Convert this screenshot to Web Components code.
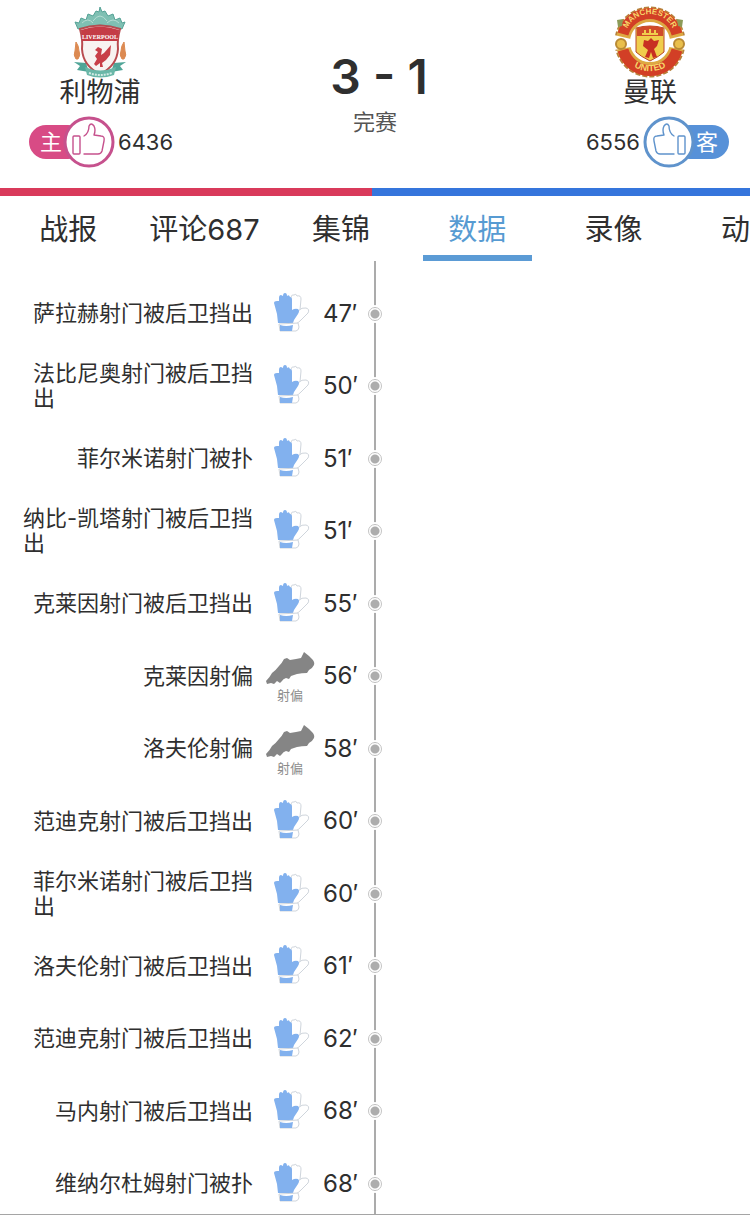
<!DOCTYPE html>
<html lang="zh-CN">
<head>
<meta charset="utf-8">
<meta name="viewport" content="width=device-width, initial-scale=1">
<title>利物浦 3 - 1 曼联</title>
<style>
  body {
    margin: 0;
    background: #fff;
    color: #2f2f2f;
    font-family: Inter, "Noto Sans CJK SC", sans-serif;
  }
</style>
</head>
<body>
<match-page></match-page>

<script>
'use strict';

const CRESTS = {
  liverpool: `
    <svg viewBox="0 0 72 72" role="img" aria-label="Liverpool">
      <path d="M14 23 L11 16 L15 17 L17 12 L22 14 L24 8 L29 10 L32 5 L35 6 L36 1 L38 6 L41 5 L44 10 L49 8 L51 14 L56 12 L58 17 L61 16 L58 23 Q36 15 14 23Z" fill="#7fc0b3" stroke="#55a296" stroke-width="1"/>
      <path d="M18 17 Q24 11 29 17 M29 15 Q36 5 43 15 M43 17 Q49 11 55 17" fill="none" stroke="#b5dcd2" stroke-width="1"/>
      <path d="M12 36 Q15 40 15 45 Q17 49 14 53 L12 53 Q9 49 11 45Z M60 36 Q57 40 57 45 Q55 49 58 53 L60 53 Q63 49 61 45Z" fill="#dc8a52" stroke="#dc8a52" stroke-width="1"/>
      <path d="M10 56 L22 57 L25 66 L13 64 L16 60Z M62 56 L50 57 L47 66 L59 64 L56 60Z" fill="#4fa597"/>
      <path d="M16 23 Q36 16 56 23 Q53 34 54 43 Q53 60 36 68 Q19 60 18 43 Q19 34 16 23Z" fill="#f8f3f1" stroke="#b94b4f" stroke-width="2"/>
      <path d="M17 24 Q36 17 55 24 L54 35 L18 35Z" fill="#c43c46"/>
      <text x="36" y="33" text-anchor="middle" font-family="Liberation Serif, serif" font-size="6" font-weight="bold" fill="#fff">LIVERPOOL</text>
      <path d="M31 44 L34 41 L38 43 L37 49 L40 47 L47 39 L46 49 L42 54 L38 57 L39 61 L36 61 L36 57 L32 60 L30 58 L33 53 L31 50 L34 46Z" fill="#c83f48"/>
      <path d="M21 61 Q36 68 52 61 L50 69 Q36 74 23 69Z" fill="#6ab7a8"/>
      <path d="M25 67 Q36 71 48 67" fill="none" stroke="#d2ebe4" stroke-width="2" stroke-dasharray="2 1"/>
    </svg>`,
  united: `
    <svg viewBox="0 0 72 72" role="img" aria-label="Manchester United">
      <defs>
        <path id="top-arc" d="M11 33 A25 25 0 0 1 61 33"/>
        <path id="low-arc" d="M6 42 A31 31 0 0 0 66 42"/>
      </defs>
      <circle cx="36" cy="36" r="34" fill="none" stroke="#b5813b" stroke-width="3" stroke-dasharray="5 2"/>
      <circle cx="36" cy="36" r="27" fill="#fff" stroke="#dda942" stroke-width="14"/>
      <path d="M9 28 A28 28 0 0 1 63 28 M9 44 A28 28 0 0 0 63 44" fill="none" stroke="#d23f26" stroke-width="11"/>
      <path d="M0 29 L17 33 L17 41 L0 44Z M72 29 L55 33 L55 41 L72 44Z" fill="#fff"/>
      <circle cx="7" cy="38" r="5" fill="#e9bf4c" stroke="#b98a35" stroke-width="2"/>
      <circle cx="65" cy="38" r="5" fill="#e9bf4c" stroke="#b98a35" stroke-width="2"/>
      <path d="M3 14 L9 13 L8 20 L4 21Z M69 14 L63 13 L64 20 L68 21Z" fill="#8c9b58"/>
      <path d="M22 22 Q36 18 50 22 L50 46 Q46 50 36 55 Q26 50 22 46Z" fill="#f0cd4c" stroke="#b8462a" stroke-width="1"/>
      <path d="M23 22 Q36 18 49 22 L49 30 L23 30Z" fill="#d04a2a"/>
      <path d="M28 28 L44 28 M31 24 L31 28 M36 23 L36 28 M41 24 L41 28" stroke="#f0cd4c" stroke-width="2"/>
      <path d="M30 34 L34 35 L37 32 L40 35 L45 34 L43 40 L40 43 L43 51 L39 52 L37 46 L35 52 L31 51 L34 44 L29 40Z" fill="#c82f22"/>
      <text font-family="Liberation Sans, sans-serif" font-size="8" font-weight="bold" fill="#f7d66a"><textPath href="#top-arc" startOffset="50%" text-anchor="middle">MANCHESTER</textPath></text>
      <text font-family="Liberation Sans, sans-serif" font-size="9" font-weight="bold" fill="#f7d66a"><textPath href="#low-arc" startOffset="50%" text-anchor="middle">UNITED</textPath></text>
    </svg>`
};

const ICONS = {
  glove: `
    <svg viewBox="0 0 50 50" width="50" height="50" aria-hidden="true">
      <path d="M26 8 Q27 5 29 6 Q31 4 32 7 Q36 6 36 10 L35 21 L32 24 L26 22Z" fill="#fff" stroke="#cfd5dc" stroke-width="1"/>
      <path d="M33 22 Q37 18 41 19 Q45 20 43 24 L36 31 Q33 34 31 35 L26 34Z" fill="#fff" stroke="#cfd5dc" stroke-width="1"/>
      <path d="M9 14 Q9 12 12 12 L14 12 L14 9 Q14 6 16 6 L18 7 Q18 4 20 4 Q22 4 22 7 Q24 5 25 8 Q27 8 27 11 L27 21 Q30 19 33 20 Q35 22 33 25 L29 31 L28 34 L13 34 L12 25Z" fill="#82b1ee"/>
      <path d="M14 35 L33 34 L34 38 Q34 41 31 42 L15 42Z" fill="#fff" stroke="#cfd5dc" stroke-width="1"/>
      <path d="M15 36 Q21 38 28 36 L27 42 L15 42Z" fill="#82b1ee"/>
    </svg>`,
  boot: `
    <svg viewBox="0 -3 50 38" width="50" height="38" aria-hidden="true">
      <path d="M1 30 Q5 26 7 22 Q11 19 14 15 Q17 12 19 8 L22 7 L25 9 L31 8 L36 7 L39 1 L44 5 L47 8 Q50 11 49 14 Q47 18 44 19 L42 22 Q37 22 32 23 L26 25 L24 28 L21 27 Q18 28 17 30 L15 32 L12 30 L9 33 L6 32 L2 33Z" fill="#858585"/>
    </svg>
    <span>射偏</span>`
};

const EVENTS = [
  ['47', 'glove', '萨拉赫射门被后卫挡出'],
  ['50', 'glove', '法比尼奥射门被后卫挡\n出'],
  ['51', 'glove', '菲尔米诺射门被扑'],
  ['51', 'glove', '纳比-凯塔射门被后卫挡\n出'],
  ['55', 'glove', '克莱因射门被后卫挡出'],
  ['56', 'boot', '克莱因射偏'],
  ['58', 'boot', '洛夫伦射偏'],
  ['60', 'glove', '范迪克射门被后卫挡出'],
  ['60', 'glove', '菲尔米诺射门被后卫挡\n出'],
  ['61', 'glove', '洛夫伦射门被后卫挡出'],
  ['62', 'glove', '范迪克射门被后卫挡出'],
  ['68', 'glove', '马内射门被后卫挡出'],
  ['68', 'glove', '维纳尔杜姆射门被扑']
];

class BaseElement extends HTMLElement {
  constructor() {
    super();
    this.attachShadow({mode: 'open'});
  }

  connectedCallback() {
    this.shadowRoot.innerHTML = this.template();
  }
}

class VoteButton extends BaseElement {
  template() {
    return `
      <style>
        :host {
          display: flex;
          align-items: center;
          gap: 3px;
          font-size: 22px;
          line-height: 26px;
          --tint: #d84b85;
          --ring: #c6518d;
        }
        :host([side="away"]) {
          flex-direction: row-reverse;
          --tint: #5791d8;
          --ring: #5f93cc;
        }
        button {
          display: flex;
          align-items: center;
          padding: 0;
          border: 0;
          background: none;
          color: #fff;
          font: inherit;
        }
        :host([side="away"]) button {
          flex-direction: row-reverse;
        }
        .side {
          box-sizing: border-box;
          width: 56px;
          height: 34px;
          padding: 0 11px;
          border-radius: 17px;
          background: var(--tint);
          line-height: 34px;
          text-align: left;
        }
        :host([side="away"]) .side {
          text-align: right;
        }
        svg {
          display: block;
          width: 52px;
          height: 52px;
          margin-left: -22px;
        }
        :host([side="away"]) svg {
          margin: 0 -22px 0 0;
          transform: scaleX(-1);
        }
      </style>
      <button type="button">
        <span class="side"><slot></slot></span>
        <svg viewBox="0 0 52 52" aria-hidden="true">
          <circle cx="26" cy="26" r="24" fill="#fff" stroke="var(--ring)" stroke-width="3"/>
          <g fill="none" stroke="var(--ring)" stroke-width="1.4" stroke-linecap="round" stroke-linejoin="round">
            <rect x="10" y="20" width="7" height="18" rx="1"/>
            <path d="M21 38 H35 Q38 38 39 35 L41 25 Q42 20 38 20 L31 19 Q33 14 31 10 Q28 6 26 10 Q26 17 21 20"/>
          </g>
        </svg>
      </button>
      <span>${this.getAttribute('count')}</span>
    `;
  }
}

class TeamCard extends BaseElement {
  template() {
    return `
      <style>
        :host {
          display: flex;
          flex-direction: column;
          align-items: center;
        }
        .crest {
          width: 72px;
          height: 72px;
        }
        .name {
          margin-bottom: 8px;
          font-size: 27px;
          line-height: 30px;
        }
        ::slotted(vote-button) {
          align-self: flex-start;
          margin-left: 29px;
        }
        :host([side="away"]) ::slotted(vote-button) {
          align-self: flex-end;
          margin: 0 21px 0 0;
        }
      </style>
      <div class="crest">${CRESTS[this.getAttribute('crest')]}</div>
      <div class="name">${this.getAttribute('name')}</div>
      <slot></slot>
    `;
  }
}

class MatchHeader extends BaseElement {
  template() {
    return `
      <style>
        :host {
          display: grid;
          grid-template-columns: 200px 1fr 200px;
          padding: 6px 0 20px;
        }
        .score {
          display: flex;
          flex-direction: column;
          align-items: center;
          padding-top: 42px;
        }
        strong {
          padding-left: 8px;
          font-size: 48px;
          font-weight: 600;
          line-height: 58px;
        }
        .state {
          font-size: 22px;
          line-height: 32px;
          color: #555;
        }
      </style>
      <team-card name="利物浦" crest="liverpool"><vote-button side="home" count="6436">主</vote-button></team-card>
      <div class="score">
        <strong>3 - 1</strong>
        <span class="state">完赛</span>
      </div>
      <team-card side="away" name="曼联" crest="united"><vote-button side="away" count="6556">客</vote-button></team-card>
    `;
  }
}

class VoteBar extends BaseElement {
  template() {
    return `
      <style>
        :host {
          display: flex;
          height: 8px;
        }
        .home {
          flex: ${this.getAttribute('home')};
          background: #d93a5b;
        }
        .away {
          flex: ${this.getAttribute('away')};
          background: #3575dc;
        }
      </style>
      <div class="home"></div>
      <div class="away"></div>
    `;
  }
}

class TabBar extends BaseElement {
  template() {
    const active = this.getAttribute('active');
    const tabs = this.getAttribute('tabs').split(',');
    return `
      <style>
        :host {
          display: block;
        }
        nav {
          display: flex;
          overflow: hidden;
        }
        /* five and a half tabs are visible at once */
        button {
          display: flex;
          flex-direction: column;
          align-items: center;
          flex: 0 0 calc(200% / 11);
          box-sizing: border-box;
          height: 65px;
          padding: 4px 0 0;
          border: 0;
          background: none;
          color: inherit;
          font: inherit;
          font-size: 29px;
          line-height: 59px;
          white-space: nowrap;
        }
        button:last-child {
          flex: 1 0 0;
          align-items: flex-end;
        }
        button[aria-current] {
          color: #579bd2;
        }
        button[aria-current]::after {
          content: "";
          flex: none;
          width: 80%;
          height: 6px;
          margin-top: -4px;
          background: #5b9bd5;
        }
      </style>
      <nav>
        ${tabs.map(t => `<button type="button"${t === active ? ' aria-current="page"' : ''}>${t}</button>`).join('')}
      </nav>
    `;
  }
}

class MatchEvent extends BaseElement {
  template() {
    return `
      <style>
        :host {
          display: grid;
          grid-template-columns: 1fr 14px 1fr;
          align-items: center;
          height: 72px;
        }
        :host(:nth-child(even)) {
          height: 73px;
        }
        .event {
          display: flex;
          align-items: center;
          justify-content: flex-end;
        }
        .text {
          margin-right: 12px;
          font-size: 22px;
          line-height: 25px;
          white-space: pre-line;
        }
        .icon {
          display: flex;
          flex-direction: column;
          align-items: center;
          width: 50px;
          margin-right: 8px;
          color: #8c8c8c;
          font-size: 13px;
          line-height: 18px;
        }
        time {
          width: 45px;
          font-size: 24px;
          line-height: 28px;
        }
        .dot {
          box-sizing: border-box;
          width: 14px;
          height: 14px;
          border: 1px solid #c4c4c4;
          border-radius: 50%;
          background: radial-gradient(circle, #adadad 4px, #fff 5px);
          box-shadow: 0 0 0 2px #fff;
        }
      </style>
      <div class="event">
        <div class="text"><slot></slot></div>
        <div class="icon">${ICONS[this.getAttribute('icon')]}</div>
        <time>${this.getAttribute('minute')}′</time>
      </div>
      <div class="dot"></div>
    `;
  }
}

class MatchTimeline extends BaseElement {
  template() {
    return `
      <style>
        :host {
          display: block;
          padding-top: 16px;
          background: linear-gradient(#ababab, #ababab) center / 2px 100% no-repeat;
        }
      </style>
      ${EVENTS.map(([minute, icon, text]) => `<match-event minute="${minute}" icon="${icon}">${text}</match-event>`).join('')}
    `;
  }
}

class MatchPage extends BaseElement {
  template() {
    return `
      <style>
        :host {
          display: flex;
          flex-direction: column;
          box-sizing: border-box;
          height: 100vh;
          border-bottom: 1px solid #a5a5a5;
        }
        match-header, vote-bar, tab-bar {
          flex: none;
        }
        .scroll {
          flex: 1;
          min-height: 0;
          overflow-y: auto;
          scrollbar-width: none;
        }
      </style>
      <match-header></match-header>
      <vote-bar home="6436" away="6556"></vote-bar>
      <tab-bar active="数据" tabs="战报,评论687,集锦,数据,录像,动"></tab-bar>
      <div class="scroll"><match-timeline></match-timeline></div>
    `;
  }
}

customElements.define('vote-button', VoteButton);
customElements.define('team-card', TeamCard);
customElements.define('match-header', MatchHeader);
customElements.define('vote-bar', VoteBar);
customElements.define('tab-bar', TabBar);
customElements.define('match-event', MatchEvent);
customElements.define('match-timeline', MatchTimeline);
customElements.define('match-page', MatchPage);
</script>
</body>
</html>
